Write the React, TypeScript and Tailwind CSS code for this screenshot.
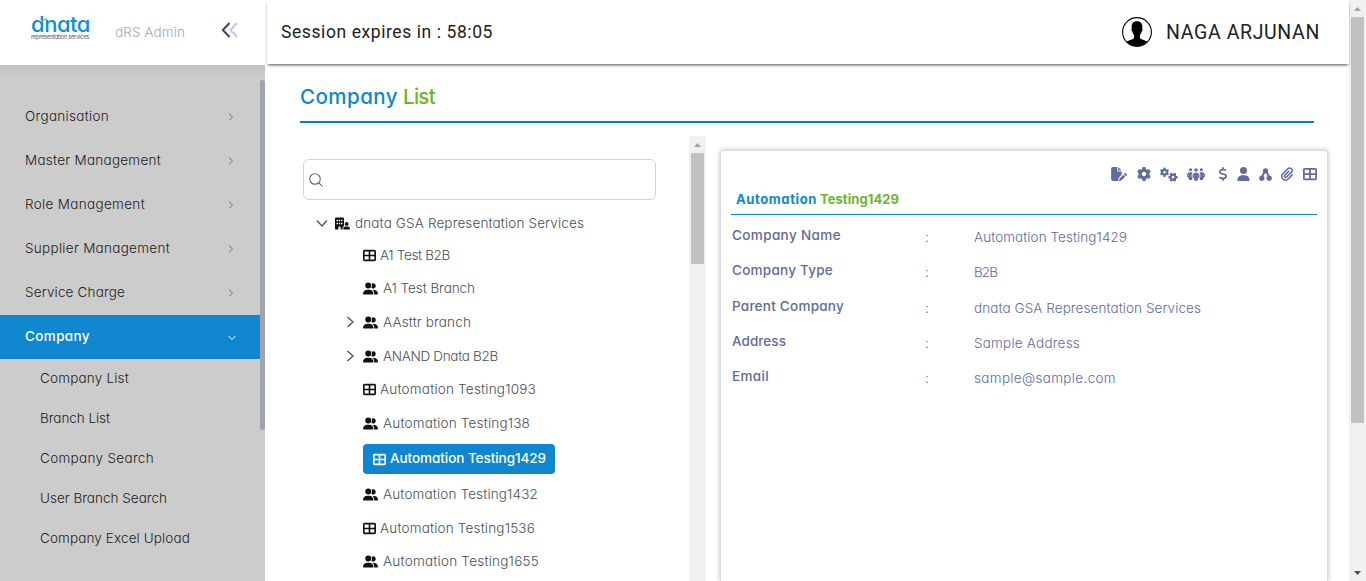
import { useLayoutEffect, useRef, useState } from "react";
import type { ReactNode } from "react";
import {
  FaBuildingUser,
  FaDollarSign,
  FaFilePen,
  FaGear,
  FaGears,
  FaPaperclip,
  FaPeopleGroup,
  FaTableCellsLarge,
  FaUser,
  FaUserGroup,
} from "react-icons/fa6";

/** Text tracked so that it fills the given width. */
function Fit({ w, className = "", children }: { w: number; className?: string; children: ReactNode }) {
  const ref = useRef<HTMLSpanElement>(null);
  const [spacing, setSpacing] = useState(0);
  useLayoutEffect(() => {
    const el = ref.current;
    if (!el) return;
    const count = (el.textContent ?? "").length;
    setSpacing((w - el.getBoundingClientRect().width) / count);
  }, [w]);
  return (
    <span ref={ref} className={`whitespace-nowrap ${className}`} style={{ letterSpacing: `${spacing}px` }}>
      {children}
    </span>
  );
}

function Chevron({ className }: { className: string }) {
  return (
    <svg viewBox="0 0 8 8" className={className} fill="none" stroke="currentColor">
      <path d="M2 0.6 L5.6 4 L2 7.4" />
    </svg>
  );
}

function Nodes() {
  return (
    <svg viewBox="0 0 14 14" className="h-[13px] w-[13px]" fill="currentColor">
      <circle cx="7" cy="3" r="2.8" />
      <circle cx="3" cy="11" r="2.8" />
      <circle cx="11" cy="11" r="2.8" />
      <path d="M6 4 L3 10 M8 4 L11 10" stroke="currentColor" strokeWidth="2" />
    </svg>
  );
}

function ScrollArrow({ down = false }: { down?: boolean }) {
  return (
    <svg viewBox="0 0 17 17" className="h-[17px] w-[17px] shrink-0">
      {down ? <path d="M5 7h7l-3.5 4z" fill="#505050" /> : <path d="M5 11h7l-3.5-4z" fill="#a3a3a3" />}
    </svg>
  );
}

function Logo() {
  return (
    <div className="ml-[31px] mt-[14px] flex w-[59px] flex-col items-start text-[#0e90cf]">
      <div className="relative flex h-[20px] items-center text-[22px] font-medium leading-[20px]">
        <Fit w={59}>dnata</Fit>
        <svg viewBox="0 0 8 6" className="absolute left-[9px] top-[3px] h-[6px] w-[8px]">
          <path d="M1 4.5 C3 4.5 3 2 7 2" stroke="#8dc63f" strokeWidth="1.4" fill="none" />
        </svg>
      </div>
      <Fit w={58} className="text-[5.8px] leading-[6px] text-[#555]">representation services</Fit>
    </div>
  );
}

const menu: [string, number][] = [
  ["Organisation", 84],
  ["Master Management", 136],
  ["Role Management", 120],
  ["Supplier Management", 145],
  ["Service Charge", 100],
];

const submenu: [string, number][] = [
  ["Company List", 89],
  ["Branch List", 70],
  ["Company Search", 114],
  ["User Branch Search", 127],
  ["Company Excel Upload", 150],
];

type Node = { name: string; w: number; kind: "table" | "group"; gap: string; open?: boolean; selected?: boolean };

const nodes: Node[] = [
  { name: "A1 Test B2B", w: 70, kind: "table", gap: "mt-3" },
  { name: "A1 Test Branch", w: 92, kind: "group", gap: "mt-[13px]" },
  { name: "AAsttr branch", w: 88, kind: "group", gap: "mt-[14px]", open: true },
  { name: "ANAND Dnata B2B", w: 115, kind: "group", gap: "mt-[14px]", open: true },
  { name: "Automation Testing1093", w: 156, kind: "table", gap: "mt-[13px]" },
  { name: "Automation Testing138", w: 147, kind: "group", gap: "mt-[14px]" },
  { name: "Automation Testing1429", w: 156, kind: "table", gap: "mt-[11px]", selected: true },
  { name: "Automation Testing1432", w: 155, kind: "group", gap: "mt-[10px]" },
  { name: "Automation Testing1536", w: 155, kind: "table", gap: "mt-[14px]" },
  { name: "Automation Testing1655", w: 156, kind: "group", gap: "mt-[13px]" },
];

const details: [string, number, string, number, string][] = [
  ["Company Name", 109, "Automation Testing1429", 153, "h-[35px]"],
  ["Company Type", 101, "B2B", 23, "h-9"],
  ["Parent Company", 112, "dnata GSA Representation Services", 227, "h-[35px]"],
  ["Address", 54, "Sample Address", 106, "h-[35px]"],
  ["Email", 37, "sample@sample.com", 142, "h-[35px]"],
];

function Sidebar() {
  return (
    <aside className="flex h-full w-[265px] shrink-0 flex-col bg-[#cccccc]">
      <div className="flex h-[65px] shrink-0 bg-white">
        <Logo />
        <Fit w={70} className="ml-[25px] mt-[22px] text-[13.5px] font-light leading-5 text-[#a2a5c0]">dRS Admin</Fit>
        <svg viewBox="0 0 18 16" className="ml-[36px] mt-[22px] h-4 w-[18px]" fill="none" strokeWidth="2">
          <path d="M16 1 L9.5 8 L16 15" stroke="#c9c8da" />
          <path d="M8.5 1 L1.8 8 L8.5 15" stroke="#454073" />
        </svg>
      </div>
      <div className="flex min-h-0 grow bg-[linear-gradient(#c4c4c4,#cccccc_14px)]">
        <nav className="w-[260px] pt-[30px] text-[13.5px] font-[350] text-[#1c1c1c]">
          {menu.map(([name, w]) => (
            <div key={name} className="flex h-11 items-center justify-between pl-[25px] pr-[25px]">
              <Fit w={w} className="pb-[2px]">{name}</Fit>
              <Chevron className="h-2 w-2 text-[#77738f]" />
            </div>
          ))}
          <div className="flex h-11 items-center justify-between bg-[#0f86cd] pl-[25px] pr-[24px] font-medium text-white">
            <Fit w={65} className="pb-[2px]">Company</Fit>
            <Chevron className="mt-[2px] h-2 w-2 rotate-90" />
          </div>
          {submenu.map(([name, w]) => (
            <div key={name} className="flex h-10 items-center pb-[2px] pl-10">
              <Fit w={w}>{name}</Fit>
            </div>
          ))}
        </nav>
        <div className="mt-[15px] h-[350px] w-[5px] rounded-t-full rounded-b-full bg-[#9ea3b1]" />
      </div>
    </aside>
  );
}

function Header() {
  return (
    <header className="z-10 ml-[2px] flex h-[64px] shrink-0 items-center justify-between bg-white pl-[14px] pr-[29px] font-['Roboto',sans-serif] text-[#212121] shadow-[0_2px_3px_-1px_rgba(0,0,0,0.7)]">
      <Fit w={212} className="text-[17.5px] font-[450]">Session expires in : 58:05</Fit>
      <div className="flex items-center gap-[14px]">
        <svg viewBox="0 0 30 30" className="h-[30px] w-[30px]">
          <circle cx="15" cy="15" r="14.4" fill="#fff" stroke="#000" strokeWidth="1.1" />
          <path d="M15 4.2c-3.7 0-5.3 2.2-5.3 5.4 0 .8.1 1.3.1 1.8-.7.2-.4 2.9.6 3.1.4 1.8 1 2.8 1.7 3.6v2.6c-.7 2.2-5.4 2-7.6 4.1a14.4 14.4 0 0 0 21 0c-2.2-2.1-6.9-1.9-7.6-4.1v-2.6c.7-.8 1.3-1.8 1.7-3.6 1-.2 1.3-2.9.6-3.1 0-.5.1-1 .1-1.8 0-3.2-1.6-5.4-5.3-5.4z" fill="#000" />
        </svg>
        <Fit w={154} className="pt-[2px] text-[19.5px] font-[450]">NAGA ARJUNAN</Fit>
      </div>
    </header>
  );
}

function TreeRow({ node }: { node: Node }) {
  const icon =
    node.kind === "table" ? <FaTableCellsLarge className="h-[13px] w-[13px]" /> : <FaUserGroup className="h-[13px] w-[15px]" />;
  if (node.selected) {
    return (
      <div className={`ml-[63px] flex h-[30px] w-[192px] items-center gap-1 rounded-[4px] bg-[#0f86cd] pl-[10px] font-medium text-white ${node.gap}`}>
        {icon}
        <Fit w={node.w} className="pb-[2px]">{node.name}</Fit>
      </div>
    );
  }
  return (
    <div className={`flex h-5 items-center pl-[44px] ${node.gap}`}>
      <div className="w-[19px]">
        {node.open && (
          <svg viewBox="0 0 12 12" className="h-3 w-3" fill="none" stroke="#495057" strokeWidth="1.3">
            <path d="M3.5 1 L9 6 L3.5 11" />
          </svg>
        )}
      </div>
      <span className="text-[#111]">{icon}</span>
      <Fit w={node.w} className={node.kind === "table" ? "ml-1" : "ml-[5px]"}>{node.name}</Fit>
    </div>
  );
}

function Tree() {
  return (
    <section className="flex h-full w-[406px] shrink-0">
      <div className="w-[389px] pt-[23px] text-[13.5px] font-[350] text-[#495057]">
        <div className="ml-[3px] flex h-[41px] w-[353px] items-center rounded-[6px] border border-[#ced4da] pl-[5px]">
          <svg viewBox="0 0 14 14" className="h-[14px] w-[14px]" fill="none" stroke="#5f6872" strokeWidth="1.1">
            <circle cx="6" cy="6" r="5.3" />
            <path d="M9.8 9.8 L13.4 13.4" />
          </svg>
        </div>
        <div className="mt-[13px] flex h-5 items-center pl-4">
          <svg viewBox="0 0 12 12" className="h-3 w-3" fill="none" stroke="#495057" strokeWidth="1.3">
            <path d="M1 3.5 L6 9 L11 3.5" />
          </svg>
          <FaBuildingUser className="ml-[7px] h-[13px] w-[15px] text-[#111]" />
          <Fit w={229} className="ml-[5px]">dnata GSA Representation Services</Fit>
        </div>
        {nodes.map((node) => (
          <TreeRow key={node.name} node={node} />
        ))}
      </div>
      <div className="flex w-[17px] flex-col items-center bg-[#f1f1f1]">
        <ScrollArrow />
        <div className="h-[111px] w-[13px] bg-[#c1c1c1]" />
      </div>
    </section>
  );
}

function Details() {
  return (
    <section className="ml-[14px] mt-[14px] flex w-[608px] shrink-0 flex-col rounded-t-[3px] border border-b-0 border-[#d8dce1] pl-[10px] pr-[10px] shadow-[0_0_5px_rgba(0,0,0,0.25)]">
      <div className="mt-[14px] flex h-[18px] items-center justify-end text-[14px] text-[#636a9c]">
        <FaFilePen className="h-[14px] w-4" />
        <FaGear className="ml-[10px]" />
        <FaGears className="ml-[9px] h-[15px] w-[18px]" />
        <FaPeopleGroup className="ml-[9px] h-[15px] w-[18px]" />
        <FaDollarSign className="ml-[11px] w-[14px]" />
        <FaUser className="ml-[7px] h-[14px] w-[13px]" />
        <span className="ml-[9px]"><Nodes /></span>
        <FaPaperclip className="ml-[8px] h-[14px] w-[14px]" />
        <FaTableCellsLarge className="ml-[9px] h-[14px] w-[14px]" />
      </div>
      <div className="flex h-[32px] items-center gap-[3px] border-b border-[#0f86cd] pl-[5px] pt-[3px] text-[13px] font-bold">
        <Fit w={81} className="text-[#0f86cd]">Automation</Fit>
        <Fit w={79} className="text-[#6cb52d]">Testing1429</Fit>
      </div>
      <div className="mt-[10px] text-[13.5px] leading-5 text-[#636a9c]">
        {details.map(([label, lw, value, vw, height]) => (
          <div key={label} className={`flex items-start pl-px ${height}`}>
            <div className="w-[193px] font-medium">
              <Fit w={lw}>{label}</Fit>
            </div>
            <div className="w-[49px] pt-[2px] font-light">:</div>
            <div className="pt-[2px] font-light">
              <Fit w={vw}>{value}</Fit>
            </div>
          </div>
        ))}
      </div>
    </section>
  );
}

export default function App() {
  return (
    <div className="flex h-[581px] w-[1366px] overflow-hidden bg-white font-['Inter','Open_Sans',sans-serif] [font-feature-settings:'cv11']">
      <Sidebar />
      <div className="flex w-[1084px] shrink-0 flex-col">
        <Header />
        <main className="flex min-h-0 grow flex-col pl-[35px]">
          <h1 className="flex h-[59px] w-[1014px] shrink-0 items-center gap-[5px] border-b-2 border-[#0f7fc4] pt-[9px] text-[20.5px] font-[450]">
            <Fit w={98} className="text-[#0f86cd]">Company</Fit>
            <Fit w={32} className="text-[#6cb52d]">List</Fit>
          </h1>
          <div className="mt-[13px] flex min-h-0 grow">
            <Tree />
            <Details />
          </div>
        </main>
      </div>
      <div className="flex w-[17px] shrink-0 flex-col items-center justify-between bg-[#f1f1f1]">
        <div className="flex flex-col items-center">
          <ScrollArrow />
          <div className="h-[406px] w-[13px] bg-[#c1c1c1]" />
        </div>
        <ScrollArrow down />
      </div>
    </div>
  );
}
